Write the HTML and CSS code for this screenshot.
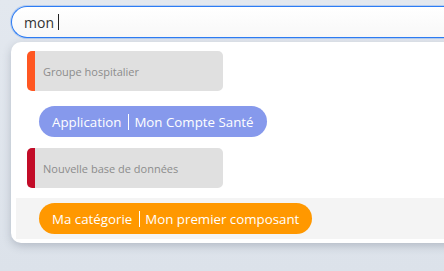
FILE: index.html
```html
<!DOCTYPE html>
<html>

  <head>
    <meta charset="UTF-8">
    <title>Recherche</title>
    <link rel="stylesheet" href="styles.css">
  </head>

  <body>
    <div class="search">
      <div class="search-input">mon <span class="caret"></span></div>
      <div class="results">
        <div class="row row-first">
          <div class="group group-orange">Groupe hospitalier</div>
        </div>
        <div class="row row-pill">
          <div class="pill pill-blue">
            <span>Application</span><span class="sep"></span><span>Mon Compte Santé</span>
          </div>
        </div>
        <div class="row">
          <div class="group group-red">Nouvelle base de données</div>
        </div>
        <div class="row row-pill row-active">
          <div class="pill pill-orange">
            <span>Ma catégorie</span><span class="sep"></span><span>Mon premier composant</span>
          </div>
        </div>
      </div>
    </div>
  </body>

</html>
```

FILE: styles.css
```css
* {
  margin: 0;
  padding: 0;
  box-sizing: border-box;
}

html,
body {
  height: 100%;
  overflow: hidden;
}

body {
  background: linear-gradient(#e3e8ef, #dce2ea);
  font-family: "Open Sans", "Noto Sans", sans-serif;
}

.search {
  width: 460px;
  padding: 6px 0 0 11px;
}

.search-input {
  display: flex;
  align-items: center;
  height: 32px;
  padding-left: 12px;
  border: 1px solid #2d7cf4;
  border-right: none;
  border-radius: 16px 0 0 16px;
  background: linear-gradient(#ffffff, #f8f8f8);
  box-shadow: 0 0 0 1px rgba(45, 124, 244, 0.25);
  font-size: 14px;
  color: #333333;
  white-space: pre;
}

.caret {
  display: inline-block;
  width: 1px;
  height: 16px;
  background: #222222;
}

.results {
  margin-top: 4px;
  padding: 4px 0 4px 5px;
  background: #ffffff;
  border-radius: 10px 0 0 10px;
  box-shadow: 0 3px 8px rgba(60, 70, 90, 0.25);
}

.row {
  padding: 5px 0 5px 11px;
}

.row-first {
  margin-bottom: 5px;
}

.row-pill {
  padding: 5px 0 5px 23px;
  margin-bottom: 1px;
}

.row-active {
  margin-top: 5px;
  margin-bottom: 0;
  background: #f4f4f4;
}

.group {
  display: flex;
  align-items: center;
  width: 196px;
  height: 40px;
  padding-left: 8px;
  background: #e0e0e0;
  border-left: 8px solid;
  border-radius: 5px;
  font-size: 11px;
  color: #8c8c8c;
}

.group-orange {
  border-left-color: #ff5722;
}

.group-red {
  border-left-color: #c20c28;
}

.pill {
  display: inline-flex;
  align-items: center;
  height: 31px;
  padding: 0 13px;
  border-radius: 16px;
  font-size: 13.3px;
  color: #ffffff;
}

.pill-blue {
  background: #8699ec;
}

.pill-orange {
  background: #ff9800;
}

.sep {
  display: inline-block;
  width: 1px;
  height: 16px;
  margin: 0 5px 0 7px;
  background: #ffffff;
}
```
